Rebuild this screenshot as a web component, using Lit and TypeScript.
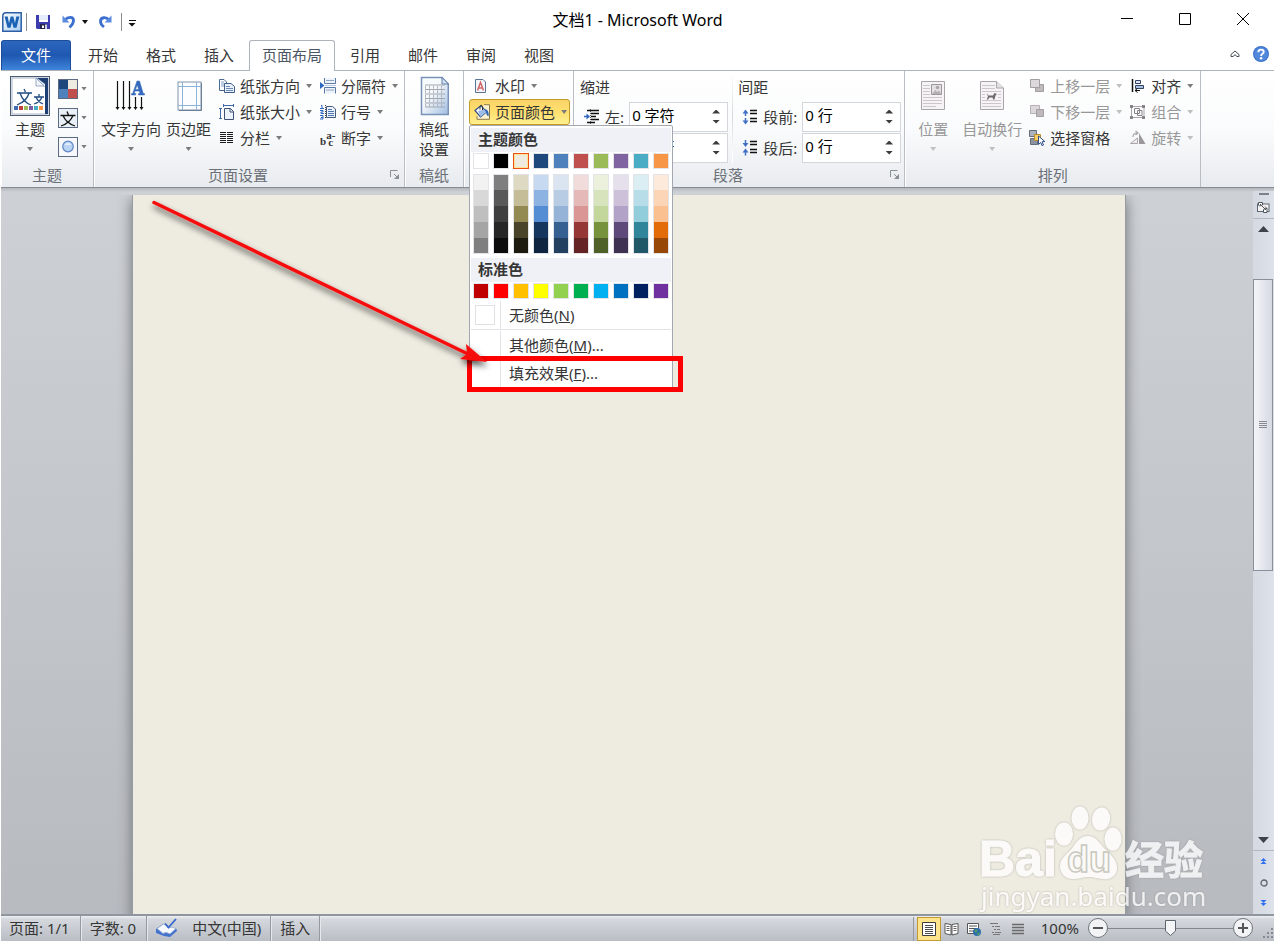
import { LitElement, html, css, nothing, type TemplateResult } from "lit";
import { customElement, state } from "lit/decorators.js";
import { classMap } from "lit/directives/class-map.js";
import { styleMap } from "lit/directives/style-map.js";

type Icon = TemplateResult;

const icons: Record<string, Icon> = {
  word: html`<svg width="20" height="20" viewBox="0 0 20 20">
    <defs><linearGradient id="wg" x1="0" y1="0" x2="1" y2="1"><stop offset="0" stop-color="#fff" /><stop offset="1" stop-color="#a9cdf0" /></linearGradient></defs>
    <path d="M4 .8H19.2V19.2H.8V4Q.8 .8 4 .8Z" fill="url(#wg)" stroke="#2c5fa5" stroke-width="1.5" />
    <path d="M2.600 4.500L5.500 15.800H8.500L10 10L11.500 15.800H14.500L17.400 4.500H14.300L13 11.200L11.300 4.500H8.700L7 11.200L5.700 4.500Z" fill="#1b62b5" />
  </svg>`,
  save: html`<svg width="14" height="14" viewBox="0 0 14 14"><path d="M0 0H14V14H1L0 13Z" fill="#3c3cae" /><path d="M3 0H12V7H3Z" fill="#e6ecfb" /><path d="M3 5H12V7H3Z" fill="#fff" /><path d="M4 9H11V14H4Z" fill="#26264a" /><path d="M6 10.5H8V13H6Z" fill="#fff" /><path d="M9 9.5H11V14H9Z" fill="#cfcfe4" /></svg>`,
  undo: html`<svg width="14" height="14" viewBox="0 0 14 14"><path d="M3 5C6 1.500 11.500 1.500 11.500 5.500C11.500 9 9.500 10.500 7.500 12.500" fill="none" stroke="#3c6fd0" stroke-width="2.800" /><path d="M.5 .5V7.500H7.500Z" fill="#5b8be0" /></svg>`,
  redo: html`<svg width="14" height="14" viewBox="0 0 14 14"><path d="M11 5C8 1.500 2.500 2 2.500 6.500C2.500 9 4 10.500 6 12" fill="none" stroke="#3c6fd0" stroke-width="2.800" /><path d="M13.500 .5V7.500H6.500Z" fill="#5b8be0" /></svg>`,
  theme: html`<svg width="40" height="40" viewBox="0 0 40 40">
    <rect x=".5" y=".5" width="39" height="39" fill="#f4f6fa" stroke="#4d5b70" />
    <rect x="2" y="2" width="36" height="36" fill="#fff" stroke="#aab6c8" />
    <path d="M27 2H38V38H35V11Q28 8 27 2Z" fill="#1f3f73" /><path d="M27 2Q28 9 35 11V8Z" fill="#dfe9f6" /><path d="M26 2L34 10H26Z" fill="#f2f6fb" stroke="#8296b4" stroke-width=".8" />
    <g fill="none" stroke="#1f4a80" stroke-width="1.300"><path d="M7 17H22M14 13L15.500 16M10 17Q13 26 21 29M19 17Q17 25 7 29" /><path d="M24 21H34M29 18V21M26 21Q28 26 33 28M32 21Q30 26 24 28" /></g>
    <path d="M4 30H8V34H4Z" fill="#3f6fb0" /><path d="M9 30H13V34H9Z" fill="#c0403d" /><path d="M14 30H18V34H14Z" fill="#9bbb59" /><path d="M19 30H23V34H19Z" fill="#7c5fa3" /><path d="M24 30H28V34H24Z" fill="#46aac5" /><path d="M29 30H33V34H29Z" fill="#f79646" />
  </svg>`,
  colors: html`<svg width="20" height="20" viewBox="0 0 20 20"><path d="M0 0H20V20H0Z" fill="#5c6b82" /><path d="M1 1H10V10H1Z" fill="#1f497d" /><path d="M10 1H19V10H10Z" fill="#eeece1" /><path d="M1 10H10V19H1Z" fill="#4f81bd" /><path d="M10 10H19V19H10Z" fill="#c0504d" /></svg>`,
  fonts: html`<svg width="20" height="20" viewBox="0 0 20 20"><rect x=".5" y=".5" width="19" height="19" fill="#eaf0f8" stroke="#5c6b82" /><path d="M2.500 7.500H17.500M9 3.500L10.500 7M5 7.500Q8 15 17 18M15 7.500Q12 15 3 18" fill="none" stroke="#111" stroke-width="1.300" /></svg>`,
  effects: html`<svg width="20" height="20" viewBox="0 0 20 20"><rect x=".5" y=".5" width="19" height="19" fill="#f6f8fb" stroke="#5c6b82" /><circle cx="10" cy="9.500" r="5.300" fill="#b9d3f5" stroke="#6288c4" stroke-width="1.200" /><path d="M6.500 8A4 4 0 0 1 13.500 8Z" fill="#e3eefc" /></svg>`,
  textDir: html`<svg width="34" height="32" viewBox="0 0 34 32"><path d="M3.500 1V28M9.500 1V28M15.500 1V28M21.500 17V28M27.500 17V28" stroke="#111" stroke-width="1.200" /><path d="M1.500 27H5.500L3.500 30ZM7.500 27H11.500L9.500 30ZM13.500 27H17.500L15.500 30ZM19.500 27H23.500L21.500 30ZM25.500 27H29.500L27.500 30Z" fill="#111" /><path d="M23 1H25.500L29.300 13.500H30.500V15H24.500V13.500H26L25.200 11H21L20.200 13.500H21.700V15H17.500V13.500H18.700ZM23.200 5L21.500 9.500H24.700Z" fill="#3569bd" stroke="#3569bd" stroke-width=".5" fill-rule="evenodd" /></svg>`,
  margins: html`<svg width="26" height="30" viewBox="-1 0 26 30"><rect x="1" y="1" width="23" height="28" fill="#fbfdff" stroke="#8095ab" /><path d="M5.500 1V29M19.500 1V29M1 5.500H24M1 24.500H24" stroke="#8eb2d8" /><path d="M24.500 2V29.500H2" stroke="#6c7f95" fill="none" /></svg>`,
  orientation: html`<svg width="16" height="16" viewBox="0 0 16 16"><path d="M.5 1.500H5L7.500 4V12.500H.5Z" fill="#fff" stroke="#4a6a98" /><path d="M2 4H5M2 6H6M2 8H5" stroke="#7f9cc4" /><path d="M5.500 5.500H12L15.500 8.500V14.500H5.500Z" fill="#eaf1fa" stroke="#3f5f8e" /><path d="M7 8.500H11M7 10.500H14M7 12.500H14" stroke="#6c8ab8" /></svg>`,
  size: html`<svg width="16" height="16" viewBox="0 0 16 16"><path d="M4 1.500H15M4.500 0V3M14.500 0V3M1.500 4V15M0 4.500H3M0 14.500H3" stroke="#3f69ad" /><path d="M5.500 4.500H11.500L14.500 7.500V15.500H5.500Z" fill="#edf3fb" stroke="#3f5274" /><path d="M11 4.500V8H14.500" fill="none" stroke="#3f5274" /></svg>`,
  columns: html`<svg width="16" height="16" viewBox="0 0 16 16"><path d="M1 2.500H7M1 4.500H7M1 6.500H7M1 8.500H7M1 10.500H7M1 12.500H7M8 2.500H14M8 4.500H14M8 6.500H14M8 8.500H14M8 10.500H14M8 12.500H14" stroke="#1c1c1c" stroke-width="1.200" /></svg>`,
  breaks: html`<svg width="17" height="16" viewBox="0 0 17 16"><path d="M4.500 0V5.500H15.500V0M4.500 15.500V9.500H15.500V15.500" fill="#eef3fb" stroke="#5b79a5" /><path d="M6 2.500H14M6 12H14" stroke="#8aa4c8" /><path d="M0 4L4.500 7.500L0 11Z" fill="#2f66c0" /><path d="M5 7.500H16" stroke="#b7c8e0" /></svg>`,
  lineNo: html`<svg width="16" height="16" viewBox="0 0 16 16"><path d="M1 1.500H2V4M0 4.500H4M0 6.500H3V8H1V9.500H4M0 11.500H3V15H0M1 13.500H3" fill="none" stroke="#2f66c0" /><path d="M6.500 2.500H12.500L15.500 5V13.500H6.500Z" fill="#edf3fb" stroke="#46597c" /><path d="M8 5.500H12M8 7.500H14M8 9.500H14M8 11.500H14" stroke="#4e76b5" /><path d="M5.500 1V15" stroke="#444" stroke-dasharray="1 1" /></svg>`,
  manuscript: html`<svg width="30" height="40" viewBox="-1 0 30 40"><defs><linearGradient id="mg" x1="0" y1="0" x2="1" y2="1"><stop offset=".4" stop-color="#f7fafd" /><stop offset="1" stop-color="#9fbce0" /></linearGradient></defs><path d="M1.500 1.500H22L28.300 8V38.500H1.500Z" fill="url(#mg)" stroke="#7892b8" stroke-width="1.500" /><path d="M22 1.500V8H28.500Z" fill="#d6e4f5" stroke="#5d7aa5" /><path d="M5 9H25M5 13.500H25M5 18H25M5 22.500H25M5 27H25M5 31H25" stroke="#a2a7ad" /><path d="M5 11.200H25M5 15.700H25M5 20.200H25M5 24.700H25M5 29.200H25" stroke="#b4b8be" stroke-width="3" stroke-dasharray="1 3" /></svg>`,
  watermark: html`<svg width="16" height="16" viewBox="0 0 16 16"><path d="M1.500 1.500H9L11.500 4V14.500H1.500Z" fill="#f4f6fa" stroke="#5c7396" /><path d="M3.500 12.500L6.500 4.500L9.500 12.500M4.500 10H8.500" fill="none" stroke="#d1656a" stroke-width="1.500" /></svg>`,
  bucket: html`<svg width="17" height="16" viewBox="0 0 17 16"><path d="M10 .7H15.500V15.300H3V12" fill="#fff3cf" stroke="#8a7a4a" /><path d="M1 6.500L7 1.500L12.500 8L6.500 13Z" fill="#fff" stroke="#2d4f86" stroke-width="1.200" /><path d="M4 7L10 5.500L12.500 8L6.500 13Z" fill="#9dbce8" /><path d="M6 5.500V2.500Q7.500 0 8.500 2.500V6" fill="none" stroke="#333" /><path d="M11 5Q15.500 6 14.500 12.500Q12 11 12 8Z" fill="#2f66b8" /></svg>`,
  indentLeft: html`<svg width="16" height="16" viewBox="0 0 16 16"><path d="M3 1.500H15M7 4.500H15M7 7.500H12M7 10.500H15M3 13.500H11" stroke="#111" stroke-width="1.500" /><path d="M0 7.500H3" stroke="#2f66c0" stroke-width="1.500" /><path d="M2.500 4.500L6 7.500L2.500 10.500Z" fill="#2f66c0" /><path d="M6.500 0V15" stroke="#555" stroke-dasharray="1 1" /></svg>`,
  spaceBefore: html`<svg width="16" height="16" viewBox="0 0 16 16"><path d="M8 1.500H15M8 4.500H15M8 9.500H15M8 12.500H15" stroke="#111" stroke-width="1.300" /><path d="M3.500 2V7M3.500 9V13" stroke="#3f6fc4" stroke-width="1.500" /><path d="M.5 4.500L3.500 .5L6.500 4.500ZM.5 11.500L3.500 15.500L6.500 11.500Z" fill="#3f6fc4" /></svg>`,
  spaceAfter: html`<svg width="16" height="16" viewBox="0 0 16 16"><path d="M8 1.500H15M8 4.500H15M8 9.500H15M8 12.500H15" stroke="#111" stroke-width="1.300" /><path d="M3.500 0V4M3.500 11V15.500" stroke="#3f6fc4" stroke-width="1.500" /><path d="M.5 3L3.500 7L6.500 3ZM.5 12.500L3.500 8.500L6.500 12.500Z" fill="#3f6fc4" /></svg>`,
  position: html`<svg width="26" height="30" viewBox="0 0 26 30"><path d="M1.500 .5H24.500V28.500H1.500Z" fill="#f5f3f5" stroke="#a9a5a9" /><path d="M3 4.500H10M3 7.500H10M3 10.500H10M3 13.500H10M3 16.500H22M3 19.500H22M3 22.500H22M3 25.500H16" stroke="#cbc7cb" /><path d="M11.500 3.500H21.500V13.500H11.500Z" fill="#e4e1e4" stroke="#9b979b" /><circle cx="17.500" cy="6.500" r="1.800" fill="#aaa6aa" /><path d="M12 13L15.500 9L17 11L19 9.500L21 13Z" fill="#b4b0b4" /></svg>`,
  wrap: html`<svg width="26" height="30" viewBox="0 0 26 30"><path d="M1.500 .5H17.500L24.500 7V28.500H1.500Z" fill="#f5f3f5" stroke="#a9a5a9" /><path d="M17.500 .5V7H24.500" fill="#e4e1e4" stroke="#a9a5a9" /><path d="M3 4.500H16M3 7.500H16M3 10.500H22M3 13.500H6M3 16.500H6M3 19.500H22M3 22.500H22M3 25.500H22M19 13.500H22M19 16.500H22" stroke="#cbc7cb" /><path d="M7.500 12L9.500 14.500H14L15.500 12L18 13L16.500 14.500L15.500 18.500H14.200L13.500 16.500H10.500L9 18.500H7.700L9 15.500Z" fill="#6d696d" /></svg>`,
  forward: html`<svg width="16" height="16" viewBox="0 0 16 16"><path d="M6.500 6.500H14.500V13.500H6.500Z" fill="#bdb9bd" stroke="#a29ea2" /><path d="M1.500 1.500H10.500V9.500H1.500Z" fill="#dcd9dc" stroke="#a29ea2" /></svg>`,
  backward: html`<svg width="16" height="16" viewBox="0 0 16 16"><path d="M1.500 1.500H10.500V9.500H1.500Z" fill="#dcd9dc" stroke="#b5b1b5" /><path d="M7.500 5.500H14.500V12.500H7.500Z" fill="#bdb9bd" stroke="#a29ea2" /></svg>`,
  pane: html`<svg width="17" height="16" viewBox="0 0 17 16"><path d="M.5 .5H7.500V6.500H.5Z" fill="#aeb4bf" stroke="#666c78" /><path d="M1.500 8.500H8.500V14.500H1.500Z" fill="#8c94a3" stroke="#666c78" /><path d="M5.500 4.500H11.500V10.500H5.500Z" fill="#f8cf68" stroke="#b98c2b" /><path d="M9.500 6L15.800 11.500L13 11.800L14.500 15L13 15.600L11.700 12.500L9.500 14.500Z" fill="#fff" stroke="#2f4f86" /></svg>`,
  align: html`<svg width="16" height="16" viewBox="0 0 16 16"><path d="M2.500 1V14" stroke="#111" stroke-width="1.500" /><path d="M5.500 2.500H10.500V5.500H5.500Z" fill="#dce8f8" stroke="#33435f" /><path d="M5.500 7.500H13.500V10.500H5.500Z" fill="#a8c0e4" stroke="#33435f" /><path d="M5 12.500H10M5 12.500L7.500 10.500M5 12.500L7.500 14.500" stroke="#111" /></svg>`,
  group: html`<svg width="16" height="16" viewBox="0 0 16 16"><path d="M1.500 2.500H14V13.500H1.500Z" fill="none" stroke="#a9a5a9" /><path d="M4.500 4.500H9.500V9.500H4.500ZM7.500 6.500H12V11.500H7.500Z" fill="none" stroke="#878387" /><path d="M0 1H3V4H0ZM12 1H15V4H12ZM0 12H3V15H0ZM12 12H15V15H12Z" fill="#878387" /></svg>`,
  rotate: html`<svg width="16" height="16" viewBox="0 0 16 16"><path d="M7.500 8V13.500H.5Z" fill="#f0eef0" stroke="#aaa6aa" /><path d="M9 3V14H15.500Z" fill="#9b979b" /><path d="M3 7Q3 3 7 3M5.500 1L8 3L5.500 5" fill="none" stroke="#aaa6aa" stroke-width="1.200" /></svg>`,
  launcher: html`<svg width="10" height="10" viewBox="0 0 10 10"><path d="M.5 7V.5H7.500" fill="none" stroke="#8a8f96" /><path d="M4 4L7 7" stroke="#8a8f96" /><path d="M9 4V9H4Z" fill="#8a8f96" /></svg>`,
  collapse: html`<svg width="10" height="8" viewBox="0 0 10 8"><path d="M1 4.500L5 1L9 4.500V6.500H7L5 4.700L3 6.500H1Z" fill="#fff" stroke="#444b55" /></svg>`,
  help: html`<svg width="16" height="16" viewBox="0 0 16 16"><circle cx="8" cy="8" r="8" fill="#3e74cd" /><circle cx="8" cy="8" r="6.800" fill="#5288dc" /><path d="M5.300 6.200Q5.300 3.600 8 3.600Q10.700 3.600 10.700 5.800Q10.700 7.200 9.200 8Q8.100 8.600 8.100 10" fill="none" stroke="#fff" stroke-width="1.900" /><circle cx="8.100" cy="12.300" r="1.200" fill="#fff" /></svg>`,
  ruler: html`<svg width="13" height="13" viewBox="0 0 13 13"><rect x=".5" y="3" width="11.500" height="7.500" fill="#f4f2f3" stroke="#5f6672" /><path d="M1.500 1.500H5.500V4L2.500 5L1.500 4ZM7 8L10 7.500V11.500H6.500V9Z" fill="#fff" stroke="#4e545e" /><path d="M3 3L9 9" stroke="#555" /><path d="M8 5.500L10 7.500" stroke="#555" /></svg>`,
  proof: html`<svg width="22" height="20" viewBox="0 0 22 20"><path d="M0 11L7 6L13 10L20 10L21 13L14 19L8 18L0 15Z" fill="#4373cf" /><path d="M1 10.500L7.500 6Q11 7 12 10Q16 8 20 10.500L14 16Q10 13.500 7 15.500Z" fill="#f5f8fd" stroke="#8fa4c9" stroke-width=".8" /><path d="M9 5.500L12.500 9.500L20 1" fill="none" stroke="#3467cb" stroke-width="1.800" /></svg>`,
  printView: html`<svg width="16" height="16" viewBox="0 0 16 16"><path d="M1.500 1.500H14.500V14.500H1.500Z" fill="#fff" stroke="#3d3d3d" /><path d="M4 4.500H12M4 6.500H12M4 8.500H12M4 10.500H12M4 12.500H12" stroke="#4d4d4d" /></svg>`,
  readView: html`<svg width="16" height="16" viewBox="0 0 16 16"><path d="M1 2.500L7 3.500V14L1 12.500ZM14 2.500L8 3.500V14L14 12.500Z" fill="#fff" stroke="#555" /><path d="M2.500 5.500H5.500M2.500 7.500H5.500M2.500 9.500H5.500M9.500 5.500H12.500M9.500 7.500H12.500M9.500 9.500H12.500" stroke="#666" /></svg>`,
  webView: html`<svg width="16" height="16" viewBox="0 0 16 16"><path d="M1.500 2.500H12.500V12.500H1.500Z" fill="#fff" stroke="#555" /><path d="M3 5H11M3 7.500H11M3 10H8" stroke="#555" /><circle cx="11" cy="11" r="4" fill="#2f6fae" /><path d="M8.500 9.500Q10 8 11.500 9Q11 11 9.500 11.500ZM11.500 12L14 11.500Q13.500 14 11.500 14.500Z" fill="#54a457" /></svg>`,
  outlineView: html`<svg width="16" height="16" viewBox="0 0 16 16"><path d="M2 2.500H10M4 5.500H6M7 5.500H12M6 8.500H8M9 8.500H12M4 11.500H6M7 11.500H13M5 13.500H12" stroke="#777" /></svg>`,
  draftView: html`<svg width="16" height="16" viewBox="0 0 16 16"><path d="M2 3.500H14M2 6.500H14M2 9.500H14M2 12.500H14" stroke="#6a6a6a" stroke-width="1.300" /></svg>`,
};

const themeRow = ["#ffffff", "#000000", "#eeece1", "#1f497d", "#4f81bd", "#c0504d", "#9bbb59", "#8064a2", "#4bacc6", "#f79646"];
const themeShades = [
  ["#f2f2f2", "#d8d8d8", "#bfbfbf", "#a5a5a5", "#7f7f7f"],
  ["#7f7f7f", "#595959", "#3f3f3f", "#262626", "#0c0c0c"],
  ["#ddd9c3", "#c4bd97", "#938953", "#494429", "#1d1b10"],
  ["#c6d9f0", "#8db3e2", "#548dd4", "#17365d", "#0f243e"],
  ["#dbe5f1", "#b8cce4", "#95b3d7", "#366092", "#244061"],
  ["#f2dcdb", "#e5b9b7", "#d99694", "#953734", "#632423"],
  ["#ebf1dd", "#d7e3bc", "#c3d69b", "#76923c", "#4f6128"],
  ["#e5e0ec", "#ccc1d9", "#b2a2c7", "#5f497a", "#3f3151"],
  ["#dbeef3", "#b7dde8", "#92cddc", "#31859b", "#205867"],
  ["#fdeada", "#fbd5b5", "#fac08f", "#e36c09", "#974806"],
];
const standardRow = ["#c00000", "#ff0000", "#ffc000", "#ffff00", "#92d050", "#00b050", "#00b0f0", "#0070c0", "#002060", "#7030a0"];
const tabs = ["开始", "格式", "插入", "页面布局", "引用", "邮件", "审阅", "视图"];

@customElement("app-root")
export class AppRoot extends LitElement {
  @state() private activeTab = "页面布局";

  static styles = css`
    :host {
      display: flex;
      flex-direction: column;
      position: relative;
      box-sizing: border-box;
      height: 100vh;
      padding: 0 1px 1px;
      overflow: hidden;
      background: #fff;
      color: #363636;
      font: 15px/20px "Noto Sans", "Noto Sans CJK SC", sans-serif;
    }
    * { box-sizing: border-box; }
    svg { display: block; flex: none; }
    button {
      display: flex;
      align-items: center;
      justify-content: center;
      margin: 0;
      padding: 0;
      border: 0;
      background: none;
      color: inherit;
      font: inherit;
      white-space: nowrap;
    }
    button:disabled { color: #989898; }
    .caret {
      flex: none;
      width: 6px;
      height: 4px;
      background: #7c7c7c;
      clip-path: polygon(0 0, 100% 0, 50% 100%);
    }
    button:disabled .caret { background: #c0c0c0; }

    .titlebar {
      display: grid;
      grid-template-columns: 1fr auto 1fr;
      align-items: center;
      height: 40px;
      color: #000;
    }
    .quick { display: flex; align-items: center; gap: 8px; padding: 4px 0 0 1px; }
    .quick .caret { background: #111; }
    .quick .bar { width: 1px; height: 18px; background: #8d8d8d; }
    .quick .tight { display: flex; gap: 4px; align-items: center; padding-right: 1px; }
    .quick .undo { gap: 6px; padding-left: 4px; }
    .quick .redo { padding: 0 1px 0 2px; }
    .quick .more { flex-direction: column; gap: 2px; padding-top: 2px; margin-left: -2px; }
    .more i { width: 7px; height: 1px; background: #111; }
    .quick .more .caret { width: 8px; }
    .title { margin: 0; font-size: 16px; font-weight: 400; }
    .window { display: flex; align-self: start; justify-content: flex-end; padding-right: 2px; }
    .window button { width: 58px; height: 38px; }

    .tabs {
      display: flex;
      height: 31px;
      flex: none;
      border-bottom: 1px solid #aeb3bb;
    }
    .tab { height: 31px; padding: 0 14px 2px; }
    .tab.active {
      margin: 0 1px;
      padding: 0 12px 2px;
      border: 1px solid #aeb3bb;
      border-bottom: 0;
      border-radius: 3px 3px 0 0;
      background: #fff;
      color: #4b5563;
    }
    .file {
      width: 70px;
      height: 30px;
      margin-right: 3px;
      padding-bottom: 1px;
      border: 1px solid #1d4c9b;
      border-bottom: 0;
      border-radius: 3px 3px 0 0;
      background: linear-gradient(#2c66bd, #1f58b1 50%, #3f85dc);
      color: #fff;
    }
    .tabtools { display: flex; align-items: center; gap: 13px; margin-left: auto; padding: 0 5px 2px 0; }

    .ribbon {
      display: flex;
      flex: none;
      height: 117px;
      border-bottom: 1px solid #878c94;
      background: linear-gradient(#fff, #fafbfc 50%, #e8ebef);
    }
    .group {
      display: flex;
      flex-direction: column;
      padding-top: 2px;
      border-right: 1px solid #b9bec5;
      box-shadow: inset 1px 0 #fff;
    }
    .body { display: flex; flex: 1; align-items: flex-start; }
    .caption { display: flex; height: 24px; line-height: 24px; color: #6b7078; text-align: center; }
    .caption span { flex: 1; }
    .caption button { width: 22px; padding-left: 4px; }
    .themes { padding: 0 6px 0 9px; gap: 8px; }
    .setup { padding: 0 6px 0 7px; }
    .setup .big + .big { margin-left: 5px; }
    .cols { display: flex; gap: 8px; margin-left: 8px; }
    .paper { padding: 0 14px; }
    .background { padding: 0 3px 0 5px; }
    .background .small { padding: 0 2px 0 4px; border: 1px solid transparent; border-radius: 3px; }
    .arrange { padding: 0 7px 0 13px; }
    .arrange .big + .big { margin-left: 14px; }
    .arrange .cols { margin-left: 7px; }

    .big { flex-direction: column; justify-content: flex-start; padding-top: 3px; }
    .big .pic { display: flex; align-items: center; height: 40px; margin-bottom: 3px; }
    .big .caret { margin-top: 8px; }
    .stack { display: flex; flex-direction: column; align-items: flex-start; }
    .small { height: 26px; }
    .small .pic { display: flex; width: 16px; height: 16px; margin-right: 5px; }
    .small .caret { margin-left: 6px; }
    .hyphen { display: flex; align-items: flex-end; font: bold 11px/9px "Liberation Serif", serif; }
    .hyphen span { display: flex; flex-direction: column; }
    .hyphen i { height: 7px; font-style: normal; line-height: 7px; white-space: nowrap; }
    .swatchbtns { display: flex; flex-direction: column; padding-top: 1px; }
    .swatchbtns button { height: 29px; gap: 3px; }
    .anchor { position: relative; }
    .background .open {
      border-color: #c29b29;
      background: linear-gradient(#fbd368, #ffdf6e 45%, #ffef8e);
    }

    .fields { display: flex; flex-direction: column; padding-left: 6px; }
    .fields + .fields {
      margin-left: 4px;
      padding: 0 3px 0 5px;
      border-left: 1px solid;
      border-image: linear-gradient(#fff, #d5d8dd 50%, #fff 90%) 1;
    }
    .fields h3 { margin: 0; font: inherit; line-height: 28px; }
    .field { display: flex; align-items: center; gap: 5px; height: 31px; padding-left: 4px; }
    .field label { padding-top: 1px; white-space: nowrap; }
    .spin {
      display: flex;
      width: 99px;
      height: 30px;
      border: 1px solid #d3d6db;
      background: #fff;
    }
    .spin input {
      flex: 1;
      min-width: 0;
      padding: 0 2px 3px;
      border: 0;
      outline: 0;
      background: none;
      color: #000;
      font: inherit;
    }
    .spin div { display: flex; flex-direction: column; justify-content: center; gap: 6px; width: 22px; }
    .spin button .caret { width: 8px; background: #3c3c3c; }
    .spin .up .caret { clip-path: polygon(50% 0, 100% 100%, 0 100%); }

    .menu {
      position: absolute;
      z-index: 5;
      top: 26px;
      left: 0;
      width: 204px;
      padding: 2px 1px 1px;
      border: 1px solid #a3a8b0;
      border-radius: 2px;
      background: #fff;
    }
    .menu h4 { margin: 0; padding: 0 7px 2px; background: #eff1f6; line-height: 22px; font-size: 15px; font-weight: 700; }
    .swatches { display: flex; gap: 4px; padding: 1px 2px 5px; }
    .swatches.std { padding-bottom: 2px; }
    .swatch { width: 16px; height: 16px; border: 1px solid #e2e4e7; background: var(--c); }
    .swatch.on { border-color: #ee4f12; box-shadow: inset 0 0 0 1px #ffe294; }
    .shades { width: 16px; height: 80px; border: 1px solid #e2e4e7; }
    .shades button { width: 14px; height: 16px; background: var(--c); }
    .shades button:first-child, .shades button:last-child { height: 15px; }
    .shadeRow { display: flex; gap: 4px; padding: 0 2px 4px; }
    .item { position: relative; display: flex; justify-content: flex-start; width: 100%; height: 28px; }
    .item .gut { display: flex; align-items: center; width: 30px; height: 100%; padding-left: 4px; margin-right: 8px; border-right: 1px solid #e2e4e7; }
    .item .none { width: 20px; height: 20px; border: 1px solid #dfe1e5; }
    .rule { height: 1px; margin-bottom: 1px; background: #e2e4e7; }
    .marked::after {
      content: "";
      position: absolute;
      inset: -3px -12px -5px -4px;
      border: 5px solid #f00;
    }

    .work {
      position: relative;
      display: flex;
      flex: 1;
      min-height: 0;
      background: linear-gradient(#b4b7bc, #cdd0d5 4px, #c3c6ca 50%, #b7babf);
    }
    .page {
      flex: 1;
      margin: 7px 128px 0 132px;
      background: #eeece1;
      box-shadow: 0 0 0 1px #989ca2, 0 6px 12px 2px #787c81;
      clip-path: inset(0 -16px 0 -16px);
    }
    .scroll {
      display: flex;
      flex-direction: column;
      align-items: center;
      width: 21px;
      margin-top: 3px;
      background: linear-gradient(90deg, #d5d9e0, #dde2eb);
    }
    .scroll .split { width: 10px; height: 2px; margin: 2px 0 6px; background: #7d8289; }
    .scroll .rulerbtn { width: 100%; height: 18px; padding-bottom: 5px; border-bottom: 1px solid #b3b8c2; }
    .scroll .arrow { width: 100%; height: 20px; }
    .scroll .arrow i { width: 11px; height: 6px; background: #3f4349; clip-path: polygon(50% 0, 100% 100%, 0 100%); }
    .scroll .arrow.down i { clip-path: polygon(0 0, 100% 0, 50% 100%); }
    .track { display: flex; flex-direction: column; flex: 1; width: 100%; }
    .lead { flex: 40; }
    .thumb {
      display: flex;
      flex: 292;
      align-items: center;
      justify-content: center;
      width: 20px;
      border: 1px solid #8a909b;
      background: linear-gradient(90deg, #f3f5f8, #d5d9e1);
    }
    .thumb i { width: 8px; height: 8px; background: repeating-linear-gradient(#868a92 0 1px, transparent 1px 2px); }
    .tail { flex: 260; }
    .browse { display: flex; flex-direction: column; width: 100%; border-top: 1px solid #b3b8c2; }
    .browse button { height: 21px; }
    .logo { position: absolute; right: 60px; bottom: 0; pointer-events: none; }
    .baidu { font: 700 50px "Liberation Sans", sans-serif; }
    .du { font: 700 36px "Liberation Sans", sans-serif; }
    .jy { font: 700 39px "Noto Sans CJK SC", sans-serif; }
    .site { font: 400 26px "Noto Sans", sans-serif; }
    .pointer { position: absolute; z-index: 8; top: 190px; left: 140px; pointer-events: none; }

    .status {
      display: flex;
      align-items: center;
      height: 27px;
      flex: none;
      border-top: 2px solid #9096a0;
      background: linear-gradient(#eef0f2, #d5d9de 3px, #b9bdc4);
    }
    .status > span, .status > button { display: flex; align-items: center; height: 100%; padding: 0 9px 2px 9px; border-right: 1px solid #959aa2; box-shadow: 1px 0 #e6e8eb; }
    .status > span:first-child, .status > span:nth-child(2) { padding-right: 10px; }
    .status > span:first-child { padding-left: 8px; }
    .status .lang { gap: 14px; }
    .status .views { display: flex; margin-left: auto; padding: 0 12px 0 3px; border-left: 1px solid #959aa2; }
    .views button { width: 22px; height: 24px; }
    .views .sel { width: 24px; border: 1px solid #c19a35; background: #ffe48b; }
    .status .zoom { padding: 0 0 1px; border: 0; box-shadow: none; }
    .round { width: 20px; height: 20px; border: 1px solid #6f747b; border-radius: 50%; background: #f2f3f5; }
    .zoom .pct { margin-right: 9px; }
    .zoom input {
      width: 125px;
      height: 20px;
      margin: 0;
      appearance: none;
      background: linear-gradient(#83888f, #83888f) center / 100% 1px no-repeat;
    }
    .zoom input::-webkit-slider-thumb {
      appearance: none;
      width: 11px;
      height: 16px;
      background: url("data:image/svg+xml,%3Csvg xmlns='http://www.w3.org/2000/svg' width='11' height='16'%3E%3Cpath d='M.5 .5H10.500V11L5.500 15.500L.5 11Z' fill='%23f4f5f7' stroke='%235f656d'/%3E%3C/svg%3E") no-repeat;
    }
    .grip { align-self: flex-end; margin-left: 8px; }
  `;

  private big(icon: Icon, label: TemplateResult | string, caret = true, disabled = false) {
    return html`<button class="big" ?disabled=${disabled}>
      <span class="pic">${icon}</span><span>${label}</span>${caret ? html`<i class="caret"></i>` : nothing}
    </button>`;
  }

  private small(icon: Icon, label: string, caret = true, disabled = false, extra = "") {
    return html`<button class="small ${extra}" ?disabled=${disabled}>
      <span class="pic">${icon}</span><span>${label}</span>${caret ? html`<i class="caret"></i>` : nothing}
    </button>`;
  }

  private field(id: string, icon: Icon, label: string, value: string) {
    return html`<div class="field">
      ${icon}<label for=${id}>${label}</label>
      <div class="spin">
        <input id=${id} type="text" .value=${value} />
        <div>
          <button class="up" aria-label="增加"><i class="caret"></i></button>
          <button aria-label="减少"><i class="caret"></i></button>
        </div>
      </div>
    </div>`;
  }

  private swatch(color: string, on = false) {
    return html`<button class=${classMap({ swatch: true, on })} style=${styleMap({ "--c": color })} aria-label=${color}></button>`;
  }

  private colorMenu() {
    return html`<div class="menu">
      <h4>主题颜色</h4>
      <div class="swatches">${themeRow.map((c, i) => this.swatch(c, i === 2))}</div>
      <div class="shadeRow">
        ${themeShades.map((col) => html`<div class="shades">${col.map((c) => html`<button style=${styleMap({ "--c": c })} aria-label=${c}></button>`)}</div>`)}
      </div>
      <h4>标准色</h4>
      <div class="swatches std">${standardRow.map((c) => this.swatch(c))}</div>
      <button class="item"><span class="gut"><i class="none"></i></span><span>无颜色(<u>N</u>)</span></button>
      <div class="rule"></div>
      <button class="item"><span class="gut"></span><span>其他颜色(<u>M</u>)...</span></button>
      <button class="item marked"><span class="gut"></span><span>填充效果(<u>F</u>)...</span></button>
    </div>`;
  }

  private logo() {
    return html`<svg class="logo" width="236" height="112" viewBox="0 0 236 112">
      <defs><filter id="halo" x="-5%" y="-5%" width="110%" height="110%"><feDropShadow dx="0" dy="0" stdDeviation="1.200" flood-color="#8d8d86" flood-opacity=".8" /></filter></defs>
      <g fill="#fff" opacity=".78" filter="url(#halo)">
        <text class="baidu" x="1" y="74" stroke="#fff" stroke-width="1">Bai</text>
        <ellipse cx="86" cy="32" rx="9" ry="11.500" /><ellipse cx="102" cy="16" rx="8.500" ry="11.500" /><ellipse cx="123" cy="17" rx="9" ry="11.500" transform="rotate(8 123 17)" /><ellipse cx="135" cy="37" rx="8.500" ry="11.500" />
        <path d="M110 34C117 34 120 39 125 45C131 51 139 57 139 66C139 74 132 78 125 77C118 76 115 75 110 75C105 75 101 77 95 77C87 77 82 71 82 64C82 56 91 51 95 45C100 38 103 34 110 34Z" />
        <text class="jy" x="147" y="72" stroke="#fff" stroke-width="1">经验</text>
        <text class="site" x="3" y="104">jingyan.baidu.com</text>
      </g>
      <text class="du" x="89" y="70" fill="#fbfaf6" stroke="#c9c8be" stroke-width="1.500">du</text>
    </svg>`;
  }

  render() {
    const hyphen = html`<span class="hyphen">b<span><i>a-</i><i>c</i></span></span>`;
    return html`
      <header class="titlebar">
        <div class="quick">
          <div class="tight">${icons.word}<i class="bar"></i></div>
          <button aria-label="保存">${icons.save}</button>
          <button class="undo" aria-label="撤消">${icons.undo}<i class="caret"></i></button>
          <button class="redo" aria-label="恢复">${icons.redo}</button>
          <i class="bar"></i>
          <button class="more" aria-label="自定义快速访问工具栏"><i></i><span class="caret"></span></button>
        </div>
        <h1 class="title">文档1 - Microsoft Word</h1>
        <div class="window">
          <button aria-label="最小化"><svg width="12" height="12"><path d="M0 5.500H12" stroke="#000" /></svg></button>
          <button aria-label="最大化"><svg width="12" height="12"><path d="M.5 .5H11.500V11.500H.5Z" fill="none" stroke="#000" /></svg></button>
          <button aria-label="关闭"><svg width="12" height="12"><path d="M0 0L12 12M12 0L0 12" stroke="#000" /></svg></button>
        </div>
      </header>

      <nav class="tabs">
        <button class="file">文件</button>
        ${tabs.map((t) => html`<button class=${classMap({ tab: true, active: t === this.activeTab })} @click=${() => (this.activeTab = t)}>${t}</button>`)}
        <div class="tabtools"><button aria-label="功能区最小化">${icons.collapse}</button><button aria-label="帮助">${icons.help}</button></div>
      </nav>

      <div class="ribbon">
        <section class="group">
          <div class="body themes">
            ${this.big(icons.theme, "主题")}
            <div class="swatchbtns">
              ${[icons.colors, icons.fonts, icons.effects].map((i) => html`<button>${i}<i class="caret"></i></button>`)}
            </div>
          </div>
          <div class="caption"><span>主题</span></div>
        </section>
        <section class="group">
          <div class="body setup">
            ${this.big(icons.textDir, "文字方向")}${this.big(icons.margins, "页边距")}
            <div class="cols">
              <div class="stack">${this.small(icons.orientation, "纸张方向")}${this.small(icons.size, "纸张大小")}${this.small(icons.columns, "分栏")}</div>
              <div class="stack">${this.small(icons.breaks, "分隔符")}${this.small(icons.lineNo, "行号")}${this.small(hyphen, "断字")}</div>
            </div>
          </div>
          <div class="caption"><span>页面设置</span><button aria-label="页面设置">${icons.launcher}</button></div>
        </section>
        <section class="group">
          <div class="body paper">${this.big(icons.manuscript, html`稿纸<br />设置`, false)}</div>
          <div class="caption"><span>稿纸</span></div>
        </section>
        <section class="group">
          <div class="body background">
            <div class="stack">
              ${this.small(icons.watermark, "水印")}
              <div class="anchor">${this.small(icons.bucket, "页面颜色", true, false, "open")}${this.colorMenu()}</div>
            </div>
          </div>
          <div class="caption"><span>页面背景</span></div>
        </section>
        <section class="group">
          <div class="body">
            <div class="fields"><h3>缩进</h3>${this.field("il", icons.indentLeft, "左:", "0 字符")}${this.field("ir", icons.indentLeft, "右:", "0 字符")}</div>
            <div class="fields"><h3>间距</h3>${this.field("sb", icons.spaceBefore, "段前:", "0 行")}${this.field("sa", icons.spaceAfter, "段后:", "0 行")}</div>
          </div>
          <div class="caption"><span>段落</span><button aria-label="段落设置">${icons.launcher}</button></div>
        </section>
        <section class="group">
          <div class="body arrange">
            ${this.big(icons.position, "位置", true, true)}${this.big(icons.wrap, "自动换行", true, true)}
            <div class="cols">
              <div class="stack">${this.small(icons.forward, "上移一层", true, true)}${this.small(icons.backward, "下移一层", true, true)}${this.small(icons.pane, "选择窗格", false)}</div>
              <div class="stack">${this.small(icons.align, "对齐")}${this.small(icons.group, "组合", true, true)}${this.small(icons.rotate, "旋转", true, true)}</div>
            </div>
          </div>
          <div class="caption"><span>排列</span></div>
        </section>
      </div>

      <main class="work">
        <div class="page"></div>
        <div class="scroll">
          <i class="split"></i>
          <button class="rulerbtn" aria-label="标尺">${icons.ruler}</button>
          <button class="arrow" aria-label="向上滚动"><i></i></button>
          <div class="track"><div class="lead"></div><div class="thumb"><i></i></div><div class="tail"></div></div>
          <button class="arrow down" aria-label="向下滚动"><i></i></button>
          <div class="browse">
            <button aria-label="前一页"><svg width="7" height="7"><path d="M3.500 0L6.500 3H.5ZM3.500 3L6.500 6H.5Z" fill="#2f6ff0" /></svg></button>
            <button aria-label="选择浏览对象"><svg width="8" height="8"><circle cx="4" cy="4" r="3" fill="none" stroke="#5f646c" stroke-width="1.300" /></svg></button>
            <button aria-label="下一页"><svg width="7" height="7"><path d="M3.500 3L6.500 0H.5ZM3.500 6L6.500 3H.5Z" fill="#2f6ff0" /></svg></button>
          </div>
        </div>
        ${this.logo()}
      </main>

      <footer class="status">
        <span>页面: 1/1</span>
        <span>字数: 0</span>
        <span class="lang">${icons.proof}中文(中国)</span>
        <button>插入</button>
        <div class="views">
          <button class="sel" aria-label="页面视图">${icons.printView}</button>
          <button aria-label="阅读版式">${icons.readView}</button>
          <button aria-label="Web 版式">${icons.webView}</button>
          <button aria-label="大纲">${icons.outlineView}</button>
          <button aria-label="草稿">${icons.draftView}</button>
        </div>
        <span class="zoom">
          <label class="pct" for="zoom">100%</label>
          <button class="round" aria-label="缩小"><svg width="10" height="10"><path d="M0 5H10" stroke="#555" stroke-width="2" /></svg></button>
          <input id="zoom" type="range" min="0" max="200" value="100" />
          <button class="round" aria-label="放大"><svg width="10" height="10"><path d="M0 5H10M5 0V10" stroke="#555" stroke-width="2" /></svg></button>
          <svg class="grip" width="13" height="13"><path d="M10 1H12V3H10ZM6 5H8V7H6ZM10 5H12V7H10ZM2 9H4V11H2ZM6 9H8V11H6ZM10 9H12V11H10Z" fill="#868b93" /></svg>
        </span>
      </footer>

      <svg class="pointer" width="360" height="190" viewBox="0 0 360 190">
        <defs><filter id="drop" x="-5%" y="-5%" width="115%" height="120%"><feDropShadow dx="1" dy="4" stdDeviation="3" flood-color="#000" flood-opacity=".7" /></filter></defs>
        <g filter="url(#drop)"><path d="M14 12.500L328 164" stroke="#f51111" stroke-width="3.500" stroke-linecap="round" /><path d="M347 172L320 169L327 164L326 154Z" fill="#f51111" /></g>
      </svg>
    `;
  }
}
